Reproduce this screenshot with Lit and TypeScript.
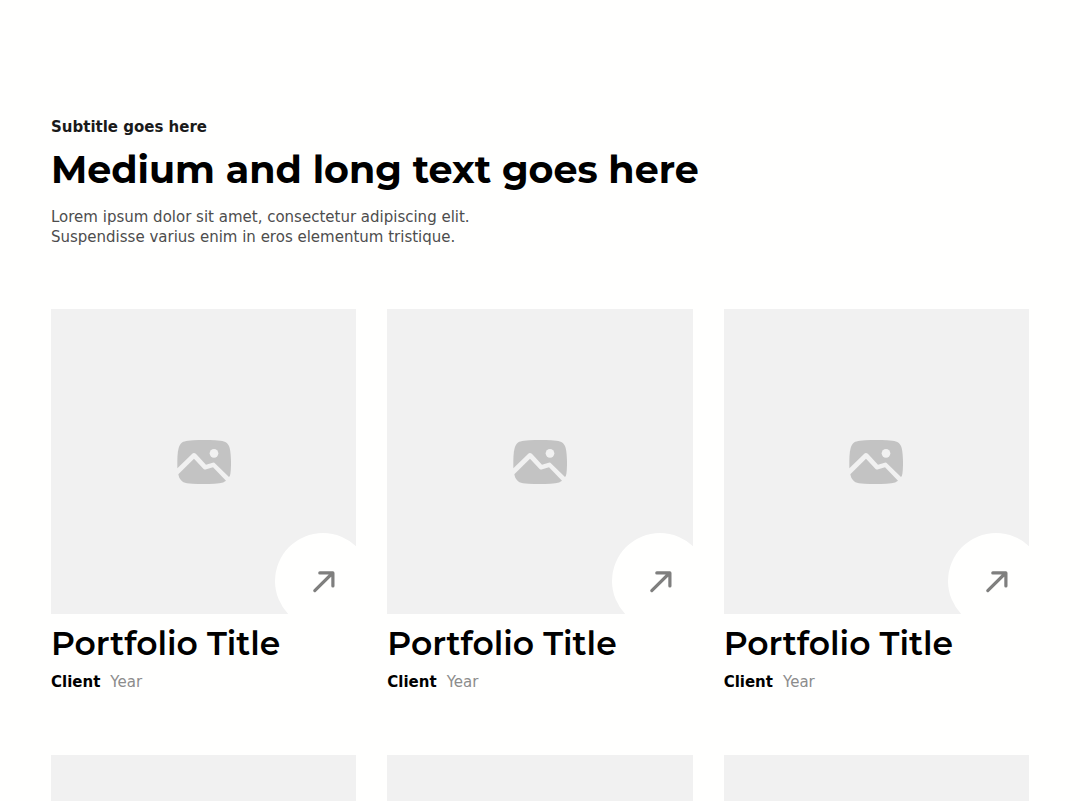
import { LitElement, html, css } from "lit";
import { customElement, property } from "lit/decorators.js";

interface Project {
  title: string;
  client: string;
  year: string;
}

@customElement("portfolio-card")
class PortfolioCard extends LitElement {
  @property() heading = "";
  @property() client = "";
  @property() year = "";

  static styles = css`
    :host {
      display: block;
      min-width: 0;
    }
    .media {
      position: relative;
      display: grid;
      place-items: center;
      aspect-ratio: 1;
      overflow: hidden;
      background: #f1f1f1;
    }
    .placeholder {
      width: 54px;
      height: 44px;
    }
    .open {
      position: absolute;
      right: -15px;
      bottom: -15px;
      display: grid;
      place-items: center;
      width: 96px;
      height: 96px;
      border-radius: 50%;
      background: #fffffe;
      color: #7f7f7e;
    }
    .arrow {
      width: 24px;
      height: 24px;
    }
    .title {
      margin: 8px 0 0;
      font: 600 33px/42px Montserrat, Inter, sans-serif;
      color: #000;
    }
    .meta {
      display: flex;
      gap: 10px;
      margin: 8px 0 0;
      line-height: 20px;
    }
    .client {
      font-weight: 700;
      color: #000;
    }
    .year {
      color: #8c8c8c;
    }
  `;

  render() {
    return html`
      <div class="media">
        <svg class="placeholder" viewBox="50 44 162 132" aria-hidden="true">
          <path
            fill="#c3c3c3"
            d="M51 123 C51 101 51 82 55 68 C60 51 68 48 83 46 C112 43 151 43 180 46 C196 48 204 53 208 68 C213 89 213 127 210 146 Q209 153 206 155 L166 116 Q161 111 157 112 L137 118 L108 87 Q101 80 95 86 L51 129 Z
            M54 147 L101 100 L129 130 Q133 134 138 132 L158 126 L197 166 Q190 172 177 174 C150 177 110 177 80 174 C64 172 56 160 54 147 Z"
          />
          <circle cx="161" cy="84" r="13" fill="#f1f1f1" />
        </svg>
        <a class="open" href="#" aria-label="Open project">
          <svg
            class="arrow"
            viewBox="0 0 24 24"
            fill="none"
            stroke="currentColor"
            stroke-width="3.2"
            stroke-linecap="round"
            stroke-linejoin="round"
            aria-hidden="true"
          >
            <path d="M3.8 21.6 L21.6 4 M8.8 3.9 H21.9 V17" />
          </svg>
        </a>
      </div>
      <h3 class="title">${this.heading}</h3>
      <p class="meta">
        <span class="client">${this.client}</span>
        <span class="year">${this.year}</span>
      </p>
    `;
  }
}

@customElement("app-root")
class AppRoot extends LitElement {
  private projects: Project[] = Array.from({ length: 6 }, () => ({
    title: "Portfolio Title",
    client: "Client",
    year: "Year",
  }));

  static styles = css`
    :host {
      display: block;
      min-height: 100vh;
      background: #fffffe;
      font: 15px/20px "DejaVu Sans", sans-serif;
    }
    .page {
      padding: 117px 51px;
    }
    .subtitle {
      margin: 0;
      font-weight: 700;
      color: #1a1a1a;
    }
    .headline {
      margin: 8px 0 0;
      font: 700 38px/50px Montserrat, Inter, sans-serif;
      color: #000;
    }
    .intro {
      max-width: 480px;
      margin: 12px 0 0;
      color: #4d4d4d;
    }
    .grid {
      display: grid;
      grid-template-columns: repeat(3, 1fr);
      gap: 63px 31px;
      margin-top: 62px;
    }
  `;

  render() {
    return html`
      <main class="page">
        <header>
          <p class="subtitle">Subtitle goes here</p>
          <h2 class="headline">Medium and long text goes here</h2>
          <p class="intro">
            Lorem ipsum dolor sit amet, consectetur adipiscing elit. Suspendisse
            varius enim in eros elementum tristique.
          </p>
        </header>
        <section class="grid">
          ${this.projects.map(
            (p) => html`<portfolio-card
              .heading=${p.title}
              .client=${p.client}
              .year=${p.year}
            ></portfolio-card>`
          )}
        </section>
      </main>
    `;
  }
}
